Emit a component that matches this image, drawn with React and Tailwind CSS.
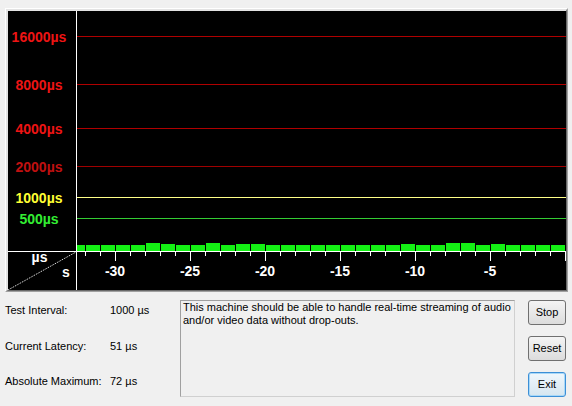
import React from 'react'

// bar heights per 15px slot: 0 = normal, 1 = medium, 2 = tall
const bars = [0, 0, 0, 0, 0, 2, 1, 0, 0, 2, 0, 1, 1, 0, 0, 0, 0, 0, 0, 0, 0, 0, 1, 0, 0, 2, 2, 0, 1, 0, 0, 0, 0]

const grid = [
  { y: 36.5, label: '16000µs', text: '#ee1414', line: '#b00000' },
  { y: 84.5, label: '8000µs', text: '#ee1414', line: '#b00000' },
  { y: 128.5, label: '4000µs', text: '#ee1414', line: '#b00000' },
  { y: 166.5, label: '2000µs', text: '#c01010', line: '#a00000' },
  { y: 197.5, label: '1000µs', text: '#ffff33', line: '#ffff88' },
  { y: 218.5, label: '500µs', text: '#33ee33', line: '#33cc33' },
]

const ticks = []
for (let x = 85.5; x < 566; x += 15) ticks.push(x)

const xLabels = [
  { x: 115, t: '-30' },
  { x: 190, t: '-25' },
  { x: 265, t: '-20' },
  { x: 340, t: '-15' },
  { x: 415, t: '-10' },
  { x: 490, t: '-5' },
]

const Chart = () => (
  <svg width="558" height="279" viewBox="8 11 558 279" className="block" style={{ fontFamily: '"Liberation Sans", Arial, sans-serif' }}>
    <rect x="8" y="11" width="558" height="279" fill="#000" />

    {/* grid lines + labels */}
    {grid.map((g) => (
      <g key={g.label}>
        <line x1="77" x2="566" y1={g.y} y2={g.y} stroke={g.line} strokeWidth="1" />
        <text x="39" y={g.y + 5} fill={g.text} fontSize="14" fontWeight="bold" textAnchor="middle">
          {g.label}
        </text>
      </g>
    ))}

    {/* bars */}
    {bars.map((h, k) => {
      const x = 71 + 15 * k
      const top = h === 2 ? 243 : h === 1 ? 244 : 245
      const x0 = Math.max(x, 77)
      return <rect key={k} x={x0} y={top} width={x + 14 - x0} height={251 - top} fill="#14f014" />
    })}

    {/* axes */}
    <line x1="76.5" x2="76.5" y1="11" y2="290" stroke="#fff" />
    <line x1="8" x2="566" y1="251.5" y2="251.5" stroke="#fff" />

    {ticks.map((x, j) => (
      <line key={x} x1={x} x2={x} y1="252" y2={j % 5 === 2 ? 261 : 256} stroke="#fff" />
    ))}

    {xLabels.map((l) => (
      <text key={l.t} x={l.x} y="276" fill="#fff" fontSize="14" fontWeight="bold" textAnchor="middle">
        {l.t}
      </text>
    ))}

    {/* corner */}
    <line x1="8" y1="290" x2="76" y2="252" stroke="#fff" strokeDasharray="1 1" />
    <text x="39.5" y="262" fill="#fff" fontSize="14" fontWeight="bold" textAnchor="middle">µs</text>
    <text x="66" y="277" fill="#fff" fontSize="14" fontWeight="bold" textAnchor="middle">s</text>
  </svg>
)

const Button = ({ children, focused }) => (
  <button
    className={`h-[25px] w-[38px] rounded-[3px] border text-[11px] leading-none text-black ${
      focused
        ? 'border-[#3c8fd6] bg-gradient-to-b from-[#f0f7fc] to-[#d6e6f0] shadow-[inset_0_0_0_1px_#a8d8f8]'
        : 'border-[#707070] bg-gradient-to-b from-[#f4f4f4] to-[#dcdcdc]'
    }`}
  >
    {children}
  </button>
)

const stats = [
  ['Test Interval:', '1000 µs'],
  ['Current Latency:', '51 µs'],
  ['Absolute Maximum:', '72 µs'],
]

export default function App() {
  return (
    <div
      className="h-[406px] w-[572px] overflow-hidden bg-[#f0f0f0] text-black"
      style={{ fontFamily: '"Liberation Sans", Arial, sans-serif' }}
    >
      {/* graph panel */}
      <div className="ml-[5px] mt-[8px] w-[563px] border-b border-l border-r border-t border-b-[#a0a0a0] border-l-white border-r-[#a0a0a0] border-t-white">
        <div className="border-b border-l-2 border-r border-t-2 border-b-[#696969] border-l-[#e3e3e3] border-r-[#696969] border-t-[#e3e3e3]">
          <Chart />
        </div>
      </div>

      {/* bottom area */}
      <div className="mt-[8px] flex pl-[5px]">
        <div className="flex w-[175px] flex-col gap-[21.5px] pt-[3px] text-[11px] leading-[14px]">
          {stats.map(([k, v]) => (
            <div key={k} className="flex">
              <span className="w-[105px]">{k}</span>
              <span>{v}</span>
            </div>
          ))}
        </div>

        <div className="h-[97px] w-[335px] border border-b-[#d0d0d0] border-l-[#a0a0a0] border-r-[#d0d0d0] border-t-[#a0a0a0] px-[2px] text-[11px] leading-[13px]">
          This machine should be able to handle real-time streaming of audio
          <br />
          and/or video data without drop-outs.
        </div>

        <div className="ml-[13px] flex flex-col gap-[11px]">
          <Button>Stop</Button>
          <Button>Reset</Button>
          <Button focused>Exit</Button>
        </div>
      </div>
    </div>
  )
}
